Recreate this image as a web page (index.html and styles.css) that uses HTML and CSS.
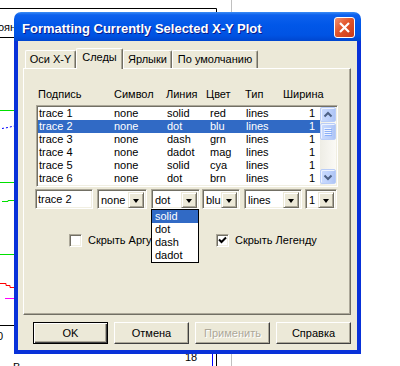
FILE: index.html
```html
<!DOCTYPE html>
<html lang="ru">
<head>
    <meta charset="UTF-8">
    <meta name="viewport" content="width=device-width, initial-scale=1.0">
    <title>Formatting Currently Selected X-Y Plot</title>
    <link rel="stylesheet" href="styles.css">
</head>
<body>
<div class="desk">
    <!-- the plot behind the dialog -->
    <svg class="chart" width="400" height="366" viewBox="0 0 400 366">
        <path d="M0 8.5H216.5V14" fill="none" stroke="#000"/>
        <path d="M0 37.5H16" stroke="#000"/>
        <text x="-2" y="31">ояние</text>
        <path d="M231.5 0V14" stroke="#c0c0c0"/>
        <path d="M0 110.5H16M0 182.5H16M0 254.5H16" stroke="#00e000"/>
        <path d="M2 128.5L8 127.5L16 125.5" stroke="#0000ff" stroke-dasharray="2 2" fill="none"/>
        <path d="M2 201.5H8V200.5H16" stroke="#00e000" fill="none"/>
        <path d="M0 283.5H6V285.5H10V287.5H16" stroke="#ff0000" fill="none"/>
        <path d="M5 298.5H16" stroke="#ff00ff"/>
        <path d="M0 325.5H16" stroke="#000"/>
        <text x="-3" y="340">0</text>
        <text x="185" y="361">18</text>
        <text x="13" y="371">В</text>
        <path d="M212.5 350V366" stroke="#0000ff"/>
        <path d="M216.5 350V366" stroke="#000"/>
        <path d="M231.5 350V366" stroke="#c0c0c0"/>
    </svg>

    <div class="dialog">
        <div class="titlebar">
            <span class="title">Formatting Currently Selected X-Y Plot</span>
            <span class="close">
                <svg width="19" height="19" viewBox="0 0 19 19"><path d="M5 5L14 14M14 5L5 14" stroke="#fff" stroke-width="2.2"/></svg>
            </span>
        </div>
        <div class="client">
            <div class="tabs">
                <div class="tab t1">Оси X-Y</div>
                <div class="tab t2 active">Следы</div>
                <div class="tab t3">Ярлыки</div>
                <div class="tab t4">По умолчанию</div>
            </div>
            <div class="panel">
                <div class="head">
                    <span>Подпись</span><span>Символ</span><span>Линия</span><span>Цвет</span><span>Тип</span><span>Ширина</span>
                </div>
                <div class="listbox">
                    <div class="rows">
                        <div class="row"><span>trace 1</span><span>none</span><span>solid</span><span>red</span><span>lines</span><span class="num">1</span></div>
                        <div class="row sel"><span>trace 2</span><span>none</span><span>dot</span><span>blu</span><span>lines</span><span class="num">1</span></div>
                        <div class="row"><span>trace 3</span><span>none</span><span>dash</span><span>grn</span><span>lines</span><span class="num">1</span></div>
                        <div class="row"><span>trace 4</span><span>none</span><span>dadot</span><span>mag</span><span>lines</span><span class="num">1</span></div>
                        <div class="row"><span>trace 5</span><span>none</span><span>solid</span><span>cya</span><span>lines</span><span class="num">1</span></div>
                        <div class="row"><span>trace 6</span><span>none</span><span>dot</span><span>brn</span><span>lines</span><span class="num">1</span></div>
                    </div>
                    <div class="vscroll">
                        <div class="sbtn">
                            <svg width="14" height="14" viewBox="0 0 14 14"><path d="M3.5 8.5L7 5L10.5 8.5" fill="none" stroke="#4d6185" stroke-width="2"/></svg>
                        </div>
                        <div class="thumb">
                            <svg width="8" height="8" viewBox="0 0 8 8"><path d="M0 0.5H7M0 2.5H7M0 4.5H7M0 6.5H7" stroke="#eef3fe"/><path d="M1 1.5H8M1 3.5H8M1 5.5H8M1 7.5H8" stroke="#8cb0f8"/></svg>
                        </div>
                        <div class="track"></div>
                        <div class="sbtn">
                            <svg width="14" height="14" viewBox="0 0 14 14"><path d="M3.5 5.5L7 9L10.5 5.5" fill="none" stroke="#4d6185" stroke-width="2"/></svg>
                        </div>
                    </div>
                </div>
                <div class="editrow">
                    <div class="field w-name">trace 2</div>
                    <div class="combo w-sym">none<span class="drop"></span></div>
                    <div class="combo w-line open">dot<span class="drop"></span>
                        <ul class="droplist">
                            <li class="sel">solid</li>
                            <li>dot</li>
                            <li>dash</li>
                            <li>dadot</li>
                        </ul>
                    </div>
                    <div class="combo w-col">blu<span class="drop"></span></div>
                    <div class="combo w-type">lines<span class="drop"></span></div>
                    <div class="combo w-wid">1<span class="drop"></span></div>
                </div>
                <div class="checks">
                    <div class="check"><span class="box"></span>Скрыть Аргумент</div>
                    <div class="check"><span class="box">
                        <svg width="9" height="9" viewBox="0 0 9 9"><path d="M1 3.5L3.5 6L8 1.5" fill="none" stroke="#000" stroke-width="2"/></svg>
                    </span>Скрыть Легенду</div>
                </div>
            </div>
            <div class="buttons">
                <div class="btn default">OK</div>
                <div class="btn">Отмена</div>
                <div class="btn disabled">Применить</div>
                <div class="btn">Справка</div>
            </div>
        </div>
    </div>
</div>
</body>
</html>
```

FILE: styles.css
```css
body {
    margin: 0;
    background: #fff;
    font-family: "Liberation Sans", Arial, sans-serif;
    font-size: 11px;
    color: #000;
}
.desk {
    position: relative;
    width: 400px;
    height: 366px;
    overflow: hidden;
}
.chart {
    position: absolute;
    left: 0;
    top: 0;
}
.chart text {
    font-family: "Liberation Sans", Arial, sans-serif;
    font-size: 11px;
}

/* window */
.dialog {
    position: absolute;
    left: 14px;
    top: 12px;
    width: 347px;
    height: 342px;
    display: flex;
    flex-direction: column;
}
.titlebar {
    height: 29px;
    flex: none;
    display: flex;
    align-items: center;
    padding: 0 6px 0 8px;
    border-radius: 7px 7px 0 0;
    background: linear-gradient(to bottom, #3b8df5 0%, #0d61ee 10%, #0157e8 45%, #0053e3 80%, #0046cf 100%);
}
.title {
    flex: 1;
    padding-top: 3px;
    color: #fff;
    font-weight: bold;
    font-size: 13px;
    text-shadow: 1px 1px 0 #0a1a8a;
    white-space: nowrap;
}
.close {
    width: 21px;
    height: 21px;
    margin-top: 2px;
    box-sizing: border-box;
    border: 1px solid #fff;
    border-radius: 3px;
    background: linear-gradient(to bottom right, #f09070, #e2552a 45%, #c8391a);
    display: flex;
    align-items: center;
    justify-content: center;
}
.client {
    flex: 1;
    background: #ece9d8;
    border: 4px solid #0831d9;
    border-top: 0;
    display: flex;
    flex-direction: column;
}

/* tabs */
.tabs {
    display: flex;
    align-items: flex-end;
    height: 20px;
    margin: 7px 0 0 7px;
}
.tab {
    height: 18px;
    box-sizing: border-box;
    border: 1px solid;
    border-color: #fff #716f64 transparent #fff;
    border-bottom: 0;
    border-radius: 2px 2px 0 0;
    box-shadow: inset -1px 0 0 #aca899;
    text-align: center;
    line-height: 17px;
}
.tab.active {
    height: 21px;
    margin-bottom: -1px;
    background: #ece9d8;
    line-height: 16px;
    position: relative;
    z-index: 1;
}
.t1 { width: 51px; }
.t2 { width: 47px; }
.t3 { width: 49px; }
.t4 { width: 86px; }

.panel {
    height: 247px;
    box-sizing: border-box;
    margin: 0 6px 0 5px;
    border: 1px solid;
    border-color: #fff #716f64 #716f64 #fff;
    box-shadow: inset -1px -1px 0 #aca899;
    padding: 19px 12px 0 12px;
}
.head {
    display: grid;
    grid-template-columns: 76px 52px 40px 39px 38px auto;
    padding-left: 2px;
    height: 13px;
    line-height: 13px;
}

/* list */
.listbox {
    margin-top: 4px;
    height: 82px;
    box-sizing: border-box;
    border: 1px solid;
    border-color: #aca899 #fff #fff #aca899;
    box-shadow: inset 1px 1px 0 #716f64, inset -1px -1px 0 #f1efe2;
    padding: 1px;
    background: #fff;
    display: flex;
}
.rows {
    flex: 1;
}
.row {
    display: grid;
    grid-template-columns: 75px 53px 43px 36px 38px auto;
    height: 13px;
    line-height: 13px;
    padding-left: 1px;
}
.row .num {
    text-align: right;
    padding-right: 5px;
}
.row.sel {
    background: #316ac5;
    color: #fff;
}
.vscroll {
    width: 16px;
    display: flex;
    flex-direction: column;
    background: linear-gradient(to right, #eeede5, #fbfaf6);
}
.sbtn, .thumb {
    height: 15px;
    box-sizing: border-box;
    margin: 0 0 1px;
    border: 1px solid #b9cdf8;
    border-radius: 2px;
    background: linear-gradient(to right, #cbdbfd, #bcd0fb 60%, #aec4f4);
    box-shadow: inset 1px 1px 0 #eef3fe;
    display: flex;
    align-items: center;
    justify-content: center;
}
.thumb {
    height: 17px;
    margin-top: 0;
}
.track {
    flex: 1;
}

/* edit controls */
.editrow {
    display: flex;
    height: 20px;
    margin: 2px 0 0 -1px;
}
.field, .combo {
    position: relative;
    height: 20px;
    box-sizing: border-box;
    border: 1px solid;
    border-color: #aca899 #fff #fff #aca899;
    box-shadow: inset 1px 1px 0 #716f64, inset -1px -1px 0 #f1efe2;
    background: #fff;
    line-height: 18px;
    padding-left: 3px;
}
.combo {
    display: flex;
    justify-content: space-between;
    padding: 2px 2px 2px 3px;
    line-height: 16px;
}
.drop {
    width: 16px;
    height: 16px;
    box-sizing: border-box;
    border: 1px solid;
    border-color: #ece9d8 #716f64 #716f64 #ece9d8;
    box-shadow: inset 1px 1px 0 #fff, inset -1px -1px 0 #aca899;
    background: #ece9d8 linear-gradient(#000, #000) no-repeat;
    background-size: 0 0;
    position: relative;
}
.drop::after {
    content: "";
    position: absolute;
    left: 4px;
    top: 6px;
    border-left: 3.5px solid transparent;
    border-right: 3.5px solid transparent;
    border-top: 4px solid #000;
}
.w-name { width: 58px; padding-left: 2px; }
.w-sym { width: 50px; margin-left: 4px; }
.w-line { width: 49px; margin-left: 4px; }
.w-col { width: 38px; margin-left: 2px; }
.w-type { width: 58px; margin-left: 4px; }
.w-wid { width: 32px; margin-left: 3px; }

.droplist {
    position: absolute;
    left: -1px;
    top: 19px;
    width: 48px;
    box-sizing: border-box;
    margin: 0;
    padding: 0;
    list-style: none;
    border: 1px solid #000;
    background: #fff;
    z-index: 2;
}
.droplist li {
    height: 13px;
    line-height: 13px;
    padding-left: 3px;
}
.droplist li.sel {
    background: #316ac5;
    color: #fff;
}

/* checkboxes */
.checks {
    display: grid;
    grid-template-columns: 147px auto;
    margin: 25px 0 0 33px;
    height: 13px;
    line-height: 13px;
}
.check {
    display: flex;
    align-items: center;
    white-space: nowrap;
}
.box {
    width: 13px;
    height: 13px;
    box-sizing: border-box;
    margin-right: 6px;
    border: 1px solid;
    border-color: #aca899 #fff #fff #aca899;
    box-shadow: inset 1px 1px 0 #716f64, inset -1px -1px 0 #f1efe2;
    background: #fff;
    display: flex;
    align-items: center;
    justify-content: center;
}

/* bottom buttons */
.buttons {
    display: flex;
    gap: 6px;
    margin: 7px 0 0 15px;
}
.btn {
    width: 75px;
    height: 22px;
    box-sizing: border-box;
    border: 1px solid;
    border-color: #fff #404040 #404040 #fff;
    box-shadow: inset -1px -1px 0 #aca899;
    text-align: center;
    line-height: 20px;
}
.btn.default {
    border-color: #000;
    box-shadow: inset 1px 1px 0 #fff, inset -1px -1px 0 #404040, inset -2px -2px 0 #aca899;
}
.btn.disabled {
    color: #aca899;
    text-shadow: 1px 1px 0 #fff;
}
```
